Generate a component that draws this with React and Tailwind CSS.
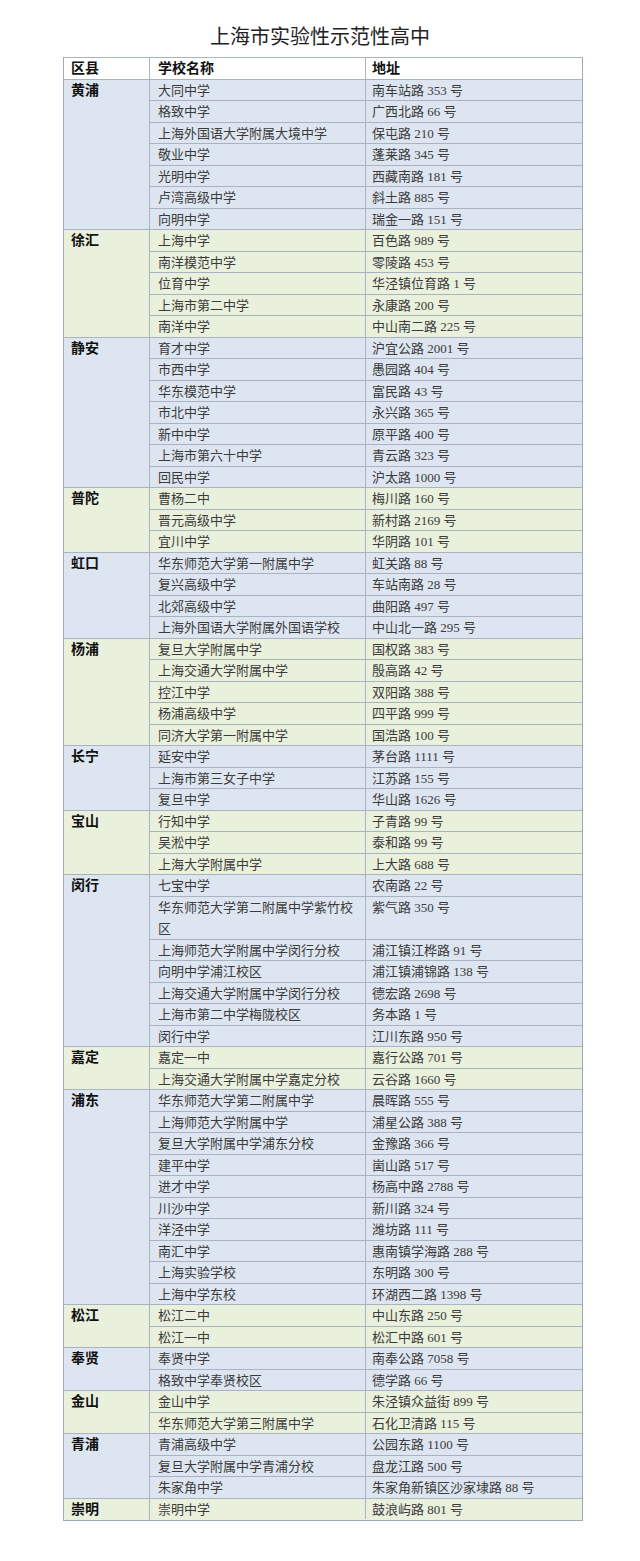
const groups = [
  {
    name: "黄浦",
    tone: "blue",
    rows: [
      ["大同中学", "南车站路 353 号"],
      ["格致中学", "广西北路 66 号"],
      ["上海外国语大学附属大境中学", "保屯路 210 号"],
      ["敬业中学", "蓬莱路 345 号"],
      ["光明中学", "西藏南路 181 号"],
      ["卢湾高级中学", "斜土路 885 号"],
      ["向明中学", "瑞金一路 151 号"],
    ],
  },
  {
    name: "徐汇",
    tone: "green",
    rows: [
      ["上海中学", "百色路 989 号"],
      ["南洋模范中学", "零陵路 453 号"],
      ["位育中学", "华泾镇位育路 1 号"],
      ["上海市第二中学", "永康路 200 号"],
      ["南洋中学", "中山南二路 225 号"],
    ],
  },
  {
    name: "静安",
    tone: "blue",
    rows: [
      ["育才中学", "沪宜公路 2001 号"],
      ["市西中学", "愚园路 404 号"],
      ["华东模范中学", "富民路 43 号"],
      ["市北中学", "永兴路 365 号"],
      ["新中中学", "原平路 400 号"],
      ["上海市第六十中学", "青云路 323 号"],
      ["回民中学", "沪太路 1000 号"],
    ],
  },
  {
    name: "普陀",
    tone: "green",
    rows: [
      ["曹杨二中", "梅川路 160 号"],
      ["晋元高级中学", "新村路 2169 号"],
      ["宜川中学", "华阴路 101 号"],
    ],
  },
  {
    name: "虹口",
    tone: "blue",
    rows: [
      ["华东师范大学第一附属中学", "虹关路 88 号"],
      ["复兴高级中学", "车站南路 28 号"],
      ["北郊高级中学", "曲阳路 497 号"],
      ["上海外国语大学附属外国语学校", "中山北一路 295 号"],
    ],
  },
  {
    name: "杨浦",
    tone: "green",
    rows: [
      ["复旦大学附属中学", "国权路 383 号"],
      ["上海交通大学附属中学", "殷高路 42 号"],
      ["控江中学", "双阳路 388 号"],
      ["杨浦高级中学", "四平路 999 号"],
      ["同济大学第一附属中学", "国浩路 100 号"],
    ],
  },
  {
    name: "长宁",
    tone: "blue",
    rows: [
      ["延安中学", "茅台路 1111 号"],
      ["上海市第三女子中学", "江苏路 155 号"],
      ["复旦中学", "华山路 1626 号"],
    ],
  },
  {
    name: "宝山",
    tone: "green",
    rows: [
      ["行知中学", "子青路 99 号"],
      ["吴淞中学", "泰和路 99 号"],
      ["上海大学附属中学", "上大路 688 号"],
    ],
  },
  {
    name: "闵行",
    tone: "blue",
    rows: [
      ["七宝中学", "农南路 22 号"],
      ["华东师范大学第二附属中学紫竹校区", "紫气路 350 号", true],
      ["上海师范大学附属中学闵行分校", "浦江镇江桦路 91 号"],
      ["向明中学浦江校区", "浦江镇浦锦路 138 号"],
      ["上海交通大学附属中学闵行分校", "德宏路 2698 号"],
      ["上海市第二中学梅陇校区", "务本路 1 号"],
      ["闵行中学", "江川东路 950 号"],
    ],
  },
  {
    name: "嘉定",
    tone: "green",
    rows: [
      ["嘉定一中", "嘉行公路 701 号"],
      ["上海交通大学附属中学嘉定分校", "云谷路 1660 号"],
    ],
  },
  {
    name: "浦东",
    tone: "blue",
    rows: [
      ["华东师范大学第二附属中学", "晨晖路 555 号"],
      ["上海师范大学附属中学", "浦星公路 388 号"],
      ["复旦大学附属中学浦东分校", "金豫路 366 号"],
      ["建平中学", "崮山路 517 号"],
      ["进才中学", "杨高中路 2788 号"],
      ["川沙中学", "新川路 324 号"],
      ["洋泾中学", "潍坊路 111 号"],
      ["南汇中学", "惠南镇学海路 288 号"],
      ["上海实验学校", "东明路 300 号"],
      ["上海中学东校", "环湖西二路 1398 号"],
    ],
  },
  {
    name: "松江",
    tone: "green",
    rows: [
      ["松江二中", "中山东路 250 号"],
      ["松江一中", "松汇中路 601 号"],
    ],
  },
  {
    name: "奉贤",
    tone: "blue",
    rows: [
      ["奉贤中学", "南奉公路 7058 号"],
      ["格致中学奉贤校区", "德学路 66 号"],
    ],
  },
  {
    name: "金山",
    tone: "green",
    rows: [
      ["金山中学", "朱泾镇众益街 899 号"],
      ["华东师范大学第三附属中学", "石化卫清路 115 号"],
    ],
  },
  {
    name: "青浦",
    tone: "blue",
    rows: [
      ["青浦高级中学", "公园东路 1100 号"],
      ["复旦大学附属中学青浦分校", "盘龙江路 500 号"],
      ["朱家角中学", "朱家角新镇区沙家埭路 88 号"],
    ],
  },
  {
    name: "崇明",
    tone: "green",
    rows: [["崇明中学", "鼓浪屿路 801 号"]],
  },
];

const font = {
  fontFamily: '"Liberation Serif", "Noto Sans CJK SC", serif',
};

function Group({ group }) {
  const bg = group.tone === "blue" ? "bg-[#dce5f0]" : "bg-[#e9f0dc]";
  return (
    <div className={`flex ${bg}`}>
      <div className="w-[86px] shrink-0 border-t border-r border-[#a9b3c1] pl-[7px] text-[14px] font-bold leading-[21px] text-[#111]">
        {group.name}
      </div>
      <div className="flex flex-1 flex-col">
        {group.rows.map(([school, addr, tall]) => (
          <div
            key={school}
            className={`flex border-t border-[#a9b3c1] text-[13px] leading-[21px] text-[#3b3b3b] ${
              tall ? "h-[43px]" : "h-[21.5px]"
            }`}
          >
            <div className="w-[216px] shrink-0 border-r border-[#a9b3c1] pl-2 pr-1">
              {school}
            </div>
            <div className="flex-1 pl-[6px]">{addr}</div>
          </div>
        ))}
      </div>
    </div>
  );
}

export default function App() {
  return (
    <div className="min-h-[1561px] bg-white pt-[25px]" style={font}>
      <h1 className="text-center text-[20px] leading-[24px] text-[#222]">
        上海市实验性示范性高中
      </h1>
      <div className="mx-[63px] mt-[8px] w-[520px] border-x border-b border-[#9ea8b6]">
        <div className="flex h-[21.5px] border-t border-[#a9b3c1] bg-white text-[14px] font-semibold leading-[21px] text-[#111]">
          <div className="w-[86px] shrink-0 border-r border-[#a9b3c1] pl-[7px]">区县</div>
          <div className="w-[216px] shrink-0 border-r border-[#a9b3c1] pl-2">学校名称</div>
          <div className="flex-1 pl-[6px]">地址</div>
        </div>
        {groups.map((g) => (
          <Group key={g.name} group={g} />
        ))}
      </div>
    </div>
  );
}
